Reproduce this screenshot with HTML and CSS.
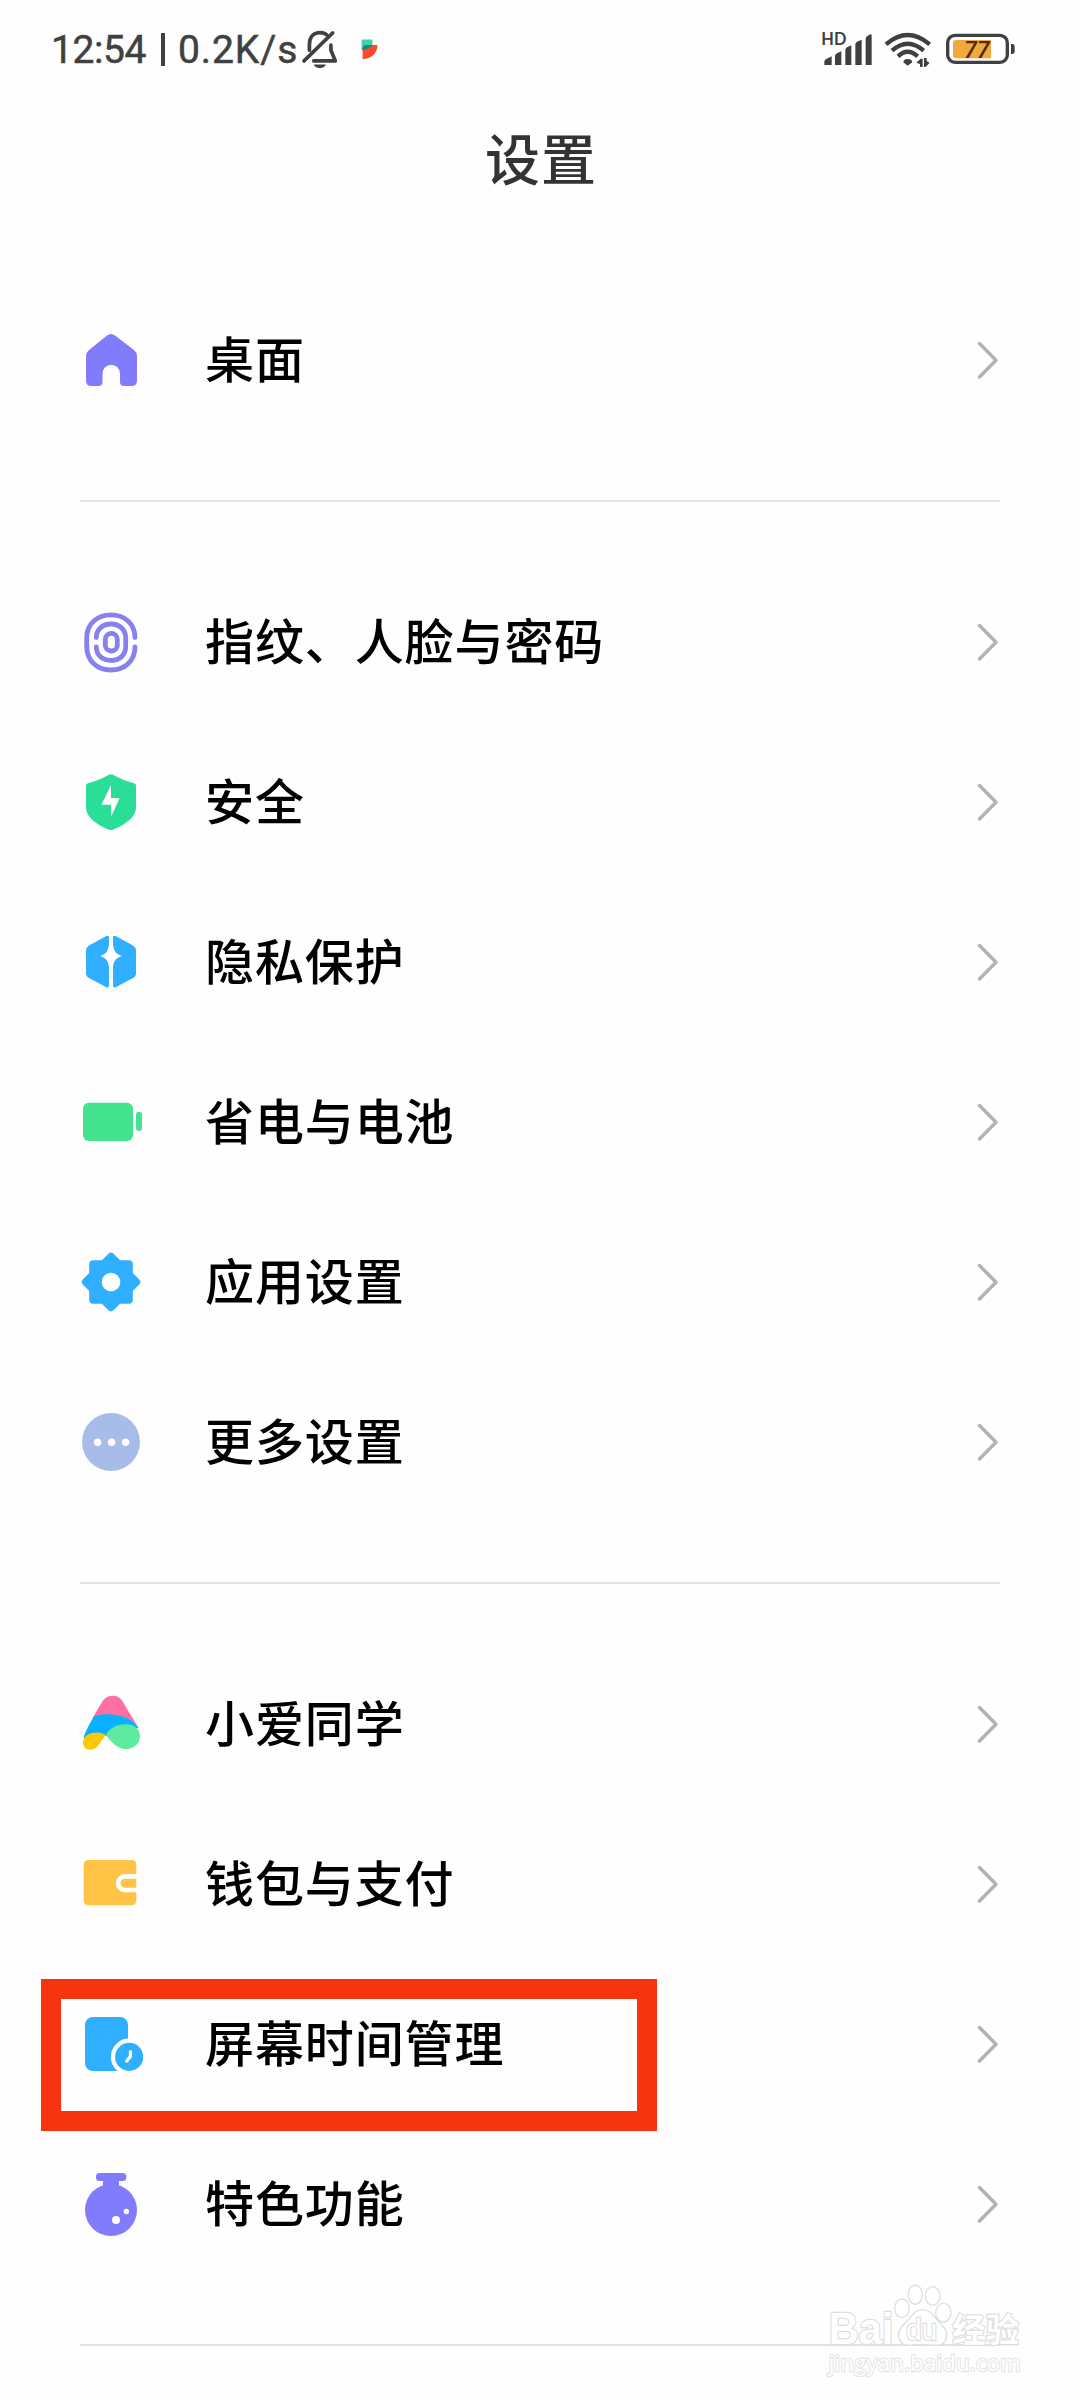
FILE: index.html
```html
<!DOCTYPE html>
<html lang="zh-CN">
<head>
<meta charset="utf-8">
<title>设置</title>
<link rel="stylesheet" href="styles.css">
</head>
<body>
<svg class="defs" width="0" height="0" aria-hidden="true">
  <symbol id="chevron" viewBox="0 0 24 40"><path d="M3.500 3.500L20 20.300L3.500 37" fill="none" stroke="#b2b2b2" stroke-width="3.400" stroke-linecap="round" stroke-linejoin="round"/></symbol>
</svg>
<header class="status">
  <div class="status-left">
    <span class="clock">12:54</span><span class="bar"></span><span class="speed">0.2K/s</span>
    <svg class="bell" viewBox="815 55 110 125" fill="none" stroke="#404040" stroke-width="11" stroke-linecap="round" stroke-linejoin="round">
      <path d="M840 121V104C840 81 852 69 872 69C880 69 887 71 892 76"/>
      <path d="M904 106V121L917 153H853"/>
      <path d="M824 153L909 70"/>
      <path d="M853 164H889C885 178 857 178 853 164Z" fill="#404040" stroke="none"/>
    </svg>
    <svg class="app" viewBox="985 80 70 75">
      <path d="M996 87H1029V103C1029 108 1015 117 996 119Z" fill="#3fcfaa"/>
      <path d="M999 147V119C999 108 1005 104 1016 104H1044C1044 130 1025 146 999 147Z" fill="#f8492c"/>
      <path d="M997 119C998 108 1005 104 1016 104H1029C1029 109 1015 117 997 119Z" fill="#128b7c"/>
    </svg>
  </div>
  <svg class="status-right" viewBox="0 0 720 240">
    <g fill="#404040">
      <text x="64" y="104" class="hd">HD</text>
      <path d="M73 165V154Q74 149 79 147L95 139V165Z"/>
      <path d="M105 165V137Q106 132 111 130L124 124V165Z"/>
      <path d="M136 165V120Q136 115 141 112L154 106V165Z"/>
      <path d="M166 165V103Q166 98 171 95L185 89V165Z"/>
      <path d="M197 165V86Q197 81 202 78L211 73Q215 72 215 77V165Z"/>
      <path d="M323 167L310 157Q311 147 323 147Q335 147 337 157Z"/>
      <path d="M362 146H368V171H360V162L349 158ZM372 171V144H380V153L389 158L378 170Z"/>
    </g>
    <g fill="none" stroke="#404040" stroke-width="13">
      <path d="M258 103Q323 47 389 103"/>
      <path d="M276 122Q323 80 371 122"/>
      <path d="M294 139Q323 112 353 139"/>
    </g>
    <rect x="443" y="76" width="179" height="81" rx="22" fill="#fff" stroke="#404040" stroke-width="10"/>
    <path d="M633 102H638Q644 102 644 110V124Q644 132 638 132H633Z" fill="#404040"/>
    <path d="M469 90H573V145H469Q459 145 459 135V100Q459 90 469 90Z" fill="#f2a83b"/>
    <text x="492" y="143" class="level">77</text>
  </svg>
</header>
<h1 class="title">设置</h1>
<main>
  <section class="group">
    <a class="row">
      <svg class="icon" viewBox="0 0 64 64"><path fill="#807cfc" d="M28 7.500Q32 4.500 36 7.500L55 22Q58 24.500 58 28V52.500Q58 58 52.500 58H45Q41 58 41 54V45.500A8.750 8.750 0 0 0 23.500 45.500V54Q23.500 58 19.500 58H12.500Q7 58 7 52.500V28Q7 24.500 10 22Z"/></svg>
      <span class="label">桌面</span><svg class="chevron"><use href="#chevron"/></svg>
    </a>
  </section>
  <section class="group">
    <a class="row">
      <svg class="icon" viewBox="0 0 64 64" fill="none" stroke="#8681ee" stroke-width="4.800" stroke-linecap="round">
        <path d="M56 27.500C56 13.500 45.500 4.800 32 4.800S7.700 13.500 7.700 28V36.500C7.700 51 18.500 60 32 60S56 51 56 37"/>
        <path d="M17.300 27.500C17.300 19 24 14 32 14S46.700 19 46.700 28V36.500C46.700 45.500 40 50.400 32 50.400S17.300 45.500 17.300 37"/>
        <rect x="26.300" y="23.400" width="12" height="17.600" rx="6"/>
      </svg>
      <span class="label">指纹、人脸与密码</span><svg class="chevron"><use href="#chevron"/></svg>
    </a>
    <a class="row">
      <svg class="icon" viewBox="0 0 64 64"><path fill="#2bde98" d="M29.500 5Q32 3.600 34.500 5Q43 10 55 13.200Q57 13.800 57 15.500V37C57 48 45 55 34.500 59.500Q32 60.600 29.500 59.500C19 55 7 48 7 37V15.500Q7 13.800 9 13.200Q21 10 29.500 5Z"/><path fill="#fff" d="M32 15L22.400 34.700H32V47L40.600 28H32Z"/></svg>
      <span class="label">安全</span><svg class="chevron"><use href="#chevron"/></svg>
    </a>
    <a class="row">
      <svg class="icon" viewBox="0 0 64 64"><path fill="#30aeff" d="M30 7.500Q30 5 27.300 6L10 15.500Q7 17.500 7 20.500V43Q7 46.500 10 48L27.300 57.200Q30 58 30 55.500ZM34 7.500Q34 5 36.700 6L54 15.500Q57 17.500 57 20.500V43Q57 46.500 54 48L36.700 57.200Q34 58 34 55.500Z"/><path fill="#fff" d="M30 14C29.500 21 27 24 21 26C27 28 29.500 31 30 37H34C34.500 31 37 28 43 26C37 24 34.500 21 34 14Z"/></svg>
      <span class="label">隐私保护</span><svg class="chevron"><use href="#chevron"/></svg>
    </a>
    <a class="row">
      <svg class="icon" viewBox="0 0 64 64" fill="#44e38f"><rect x="4" y="12.700" width="50" height="38.300" rx="6"/><rect x="57" y="21.700" width="6" height="19.300" rx="3"/></svg>
      <span class="label">省电与电池</span><svg class="chevron"><use href="#chevron"/></svg>
    </a>
    <a class="row">
      <svg class="icon" viewBox="0 0 64 64" fill="#30aeff"><rect x="10.200" y="10.200" width="43.600" height="43.600" rx="4"/><rect x="10.200" y="10.200" width="43.600" height="43.600" rx="4" transform="rotate(45 32 32)"/><circle cx="32" cy="32" r="9.300" fill="#fff"/></svg>
      <span class="label">应用设置</span><svg class="chevron"><use href="#chevron"/></svg>
    </a>
    <a class="row">
      <svg class="icon" viewBox="0 0 64 64" fill="#fff"><circle cx="32" cy="32" r="29" fill="#a8bce9"/><circle cx="18.600" cy="32.300" r="3.700"/><circle cx="32.600" cy="32.300" r="3.700"/><circle cx="46.600" cy="32.300" r="3.700"/></svg>
      <span class="label">更多设置</span><svg class="chevron"><use href="#chevron"/></svg>
    </a>
  </section>
  <section class="group">
    <a class="row">
      <svg class="icon" viewBox="0 0 64 64">
        <path fill="#fd6ea4" d="M13.500 26L24 8.500Q27.500 3.700 33.700 3.700T43 8.500L59.500 36L34 30Z"/>
        <path fill="#07b1ff" d="M4.300 46C7 38 11 31 14.500 25C22 21.500 31 22 39 23.500C49 25.500 55 29 59.500 36L46 37L27 44L18 43Z"/>
        <path fill="#fbc804" d="M26.700 43C21 38.500 5 39.500 4 50C3.800 55 7 57.700 11.700 57.700C19 57.500 21 49.500 26.700 43Z"/>
        <path fill="#5eeb9f" d="M26.700 43C31 36 38 32.300 46 32.300C55 32.300 61 37 61 44C61 51.500 55 57 47 57C37.500 57 32.500 49.500 26.700 43Z"/>
      </svg>
      <span class="label">小爱同学</span><svg class="chevron"><use href="#chevron"/></svg>
    </a>
    <a class="row">
      <svg class="icon" viewBox="0 0 64 64"><rect x="4.700" y="8" width="52.600" height="45.300" rx="4.500" fill="#ffc445"/><path d="M59 24.400H46A6.800 6.800 0 0 0 46 38H59" fill="none" stroke="#fff" stroke-width="4.600"/></svg>
      <span class="label">钱包与支付</span><svg class="chevron"><use href="#chevron"/></svg>
    </a>
    <a class="row highlighted">
      <svg class="icon" viewBox="0 0 64 64"><rect x="6" y="5" width="43" height="54" rx="8" fill="#30aeff"/><circle cx="50.200" cy="44.900" r="16.200" fill="#30aeff" stroke="#fff" stroke-width="4.200"/><path d="M51.400 39.500V44.500L47.700 49" fill="none" stroke="#fff" stroke-width="3.200" stroke-linecap="round" stroke-linejoin="round"/></svg>
      <span class="label">屏幕时间管理</span><svg class="chevron"><use href="#chevron"/></svg>
    </a>
    <a class="row">
      <svg class="icon" viewBox="0 0 64 64" fill="#807cfc"><rect x="17" y="1" width="30.300" height="8" rx="3.500"/><path d="M24 7H40V16H24Z"/><circle cx="32" cy="38" r="26"/><circle cx="37" cy="48" r="4" fill="#fff"/><circle cx="47.300" cy="39.500" r="2.700" fill="#fff"/></svg>
      <span class="label">特色功能</span><svg class="chevron"><use href="#chevron"/></svg>
    </a>
  </section>
</main>
<svg class="watermark" viewBox="0 0 690 420">
  <g fill="#fff" fill-opacity=".8" stroke="#dedede" stroke-width="4">
    <text x="56" y="253" class="brand" textLength="194" lengthAdjust="spacingAndGlyphs">Bai</text>
    <ellipse cx="276" cy="145" rx="22" ry="28"/><ellipse cx="316" cy="104" rx="21" ry="29"/><ellipse cx="368" cy="108" rx="22" ry="28"/><ellipse cx="400" cy="158" rx="23" ry="28"/>
    <path d="M338 149C363 149 371 171 388 187C406 203 416 222 406 241C393 266 365 253 338 253S283 266 270 241C260 222 270 203 288 187C305 171 313 149 338 149Z"/>
    <text x="289" y="241" class="du" textLength="92" lengthAdjust="spacingAndGlyphs">du</text>
    <text x="427" y="246" class="exp" textLength="200">经验</text>
    <text x="56" y="332" class="url" textLength="576">jingyan.baidu.com</text>
  </g>
</svg>
</body>
</html>
```
FILE: styles.css
```css
*, *::after { box-sizing: border-box; }
body {
  margin: 0;
  position: relative;
  width: 1080px;
  height: 2400px;
  overflow: hidden;
  background: #fefefe;
  color: #000;
  font-family: "Noto Sans CJK SC", sans-serif;
}
.defs { position: absolute; }
.status {
  display: flex;
  justify-content: space-between;
  height: 90px;
  padding: 10px 40px 0 51px;
}
.status-left {
  display: flex;
  align-items: center;
  height: 80px;
  padding-bottom: 2px;
  color: #404040;
  font: 400 39px/1 Roboto, sans-serif;
  -webkit-text-stroke: 0.5px #404040;
}
.clock { width: 110px; padding-top: 2px; letter-spacing: -0.4px; }
.bar { width: 4px; height: 33px; margin-right: 13px; background: #404040; }
.speed { width: 123px; padding-top: 2px; letter-spacing: 0.9px; }
.bell { width: 37px; height: 42px; }
.app { width: 23px; height: 25px; margin-left: 20px; }
.status-right { width: 240px; height: 80px; }
.hd { font: 700 49px Lato, sans-serif; }
.level { font: italic 500 70px Roboto, sans-serif; fill: #4a2c08; }
.title {
  height: 190px;
  margin: 0;
  padding: 26px 0 0 2px;
  text-align: center;
  color: #333;
  font-size: 55px;
  line-height: 80px;
  font-weight: 500;
  letter-spacing: 1px;
}
.group { margin: 0 80px; padding-bottom: 60px; border-bottom: 2px solid #e3e3e3; }
.group + .group { padding-top: 60px; }
.row {
  position: relative;
  display: flex;
  align-items: center;
  height: 160px;
}
.icon { flex: none; width: 64px; height: 64px; margin-left: -1px; }
.label {
  flex: 1;
  margin-left: 62px;
  padding-bottom: 6px;
  font-size: 49px;
  font-weight: 500;
  line-height: 72px;
  letter-spacing: 0.9px;
}
.chevron { width: 24px; height: 40px; }
.highlighted::after {
  content: "";
  position: absolute;
  left: -39px;
  top: 15px;
  width: 616px;
  height: 152px;
  border: 20px solid #f63410;
}
.watermark { position: absolute; left: 810px; top: 2260px; width: 230px; height: 140px; }
.watermark text { paint-order: stroke; stroke-width: 7px; fill-opacity: 1; }
.brand { font: 700 132px "Liberation Sans", sans-serif; }
.du { font: 400 86px "Liberation Sans", sans-serif; }
.exp { font: 700 100px "Noto Sans CJK SC", sans-serif; }
.url { font: 400 66px "Open Sans", sans-serif; stroke: #e6e6e6; }
```
